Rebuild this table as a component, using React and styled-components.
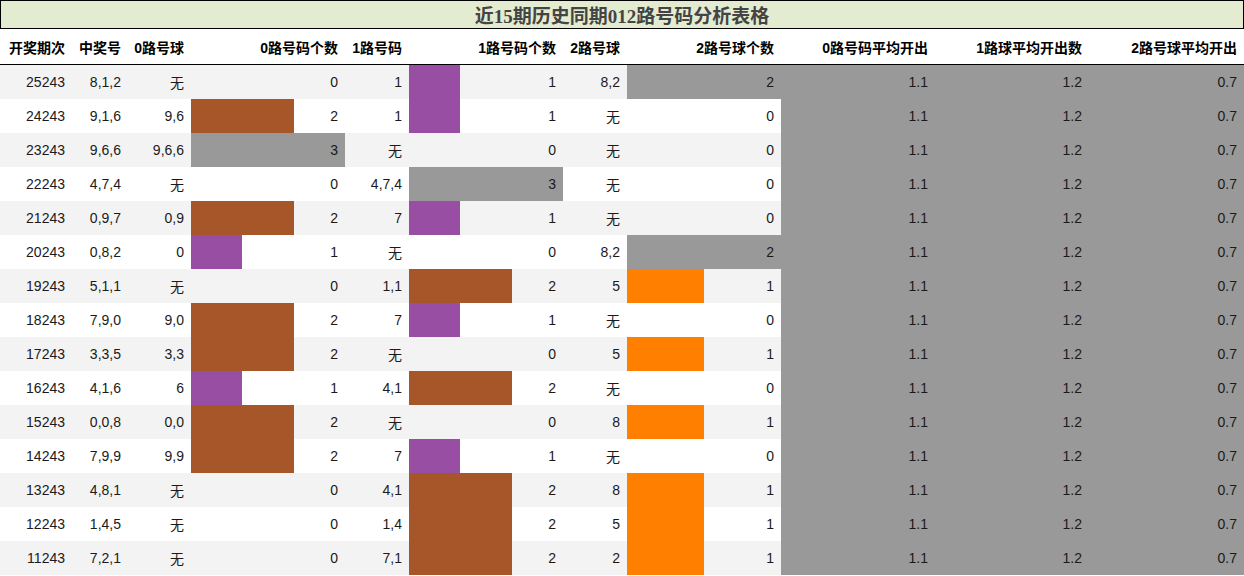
import styled, { createGlobalStyle } from 'styled-components';

const GlobalStyle = createGlobalStyle`
  body {
    margin: 0;
    background: #ffffff;
    font-family: 'Liberation Sans', 'Noto Sans CJK SC', sans-serif;
  }
`;

const COLS = '72px 56px 63px 154px 64px 154px 64px 154px 154px 154px 1fr';

const ZERO_ONE_COLORS = { 1: '#984ea3', 2: '#a65628', 3: '#999999' };
const TWO_COLORS = { 1: '#ff7f00', 2: '#999999' };

const rows = [
  ['25243', '8,1,2', '无', 0, '1', 1, '8,2', 2],
  ['24243', '9,1,6', '9,6', 2, '1', 1, '无', 0],
  ['23243', '9,6,6', '9,6,6', 3, '无', 0, '无', 0],
  ['22243', '4,7,4', '无', 0, '4,7,4', 3, '无', 0],
  ['21243', '0,9,7', '0,9', 2, '7', 1, '无', 0],
  ['20243', '0,8,2', '0', 1, '无', 0, '8,2', 2],
  ['19243', '5,1,1', '无', 0, '1,1', 2, '5', 1],
  ['18243', '7,9,0', '9,0', 2, '7', 1, '无', 0],
  ['17243', '3,3,5', '3,3', 2, '无', 0, '5', 1],
  ['16243', '4,1,6', '6', 1, '4,1', 2, '无', 0],
  ['15243', '0,0,8', '0,0', 2, '无', 0, '8', 1],
  ['14243', '7,9,9', '9,9', 2, '7', 1, '无', 0],
  ['13243', '4,8,1', '无', 0, '4,1', 2, '8', 1],
  ['12243', '1,4,5', '无', 0, '1,4', 2, '5', 1],
  ['11243', '7,2,1', '无', 0, '7,1', 2, '2', 1],
];

const headers = [
  '开奖期次', '中奖号', '0路号球', '0路号码个数', '1路号码', '1路号码个数',
  '2路号球', '2路号球个数', '0路号码平均开出', '1路球平均开出数', '2路号球平均开出',
];

export default function App() {
  return (
    <>
      <GlobalStyle />
      <Page>
        <Title>近15期历史同期012路号码分析表格</Title>
        <HeaderRow>
          {headers.map((h) => <HeadCell key={h}>{h}</HeadCell>)}
        </HeaderRow>
        {rows.map((r, i) => {
          const bg = i % 2 === 0 ? '#f3f3f3' : '#ffffff';
          return (
            <Row key={r[0]} $bg={bg}>
              <Cell>{r[0]}</Cell>
              <Cell>{r[1]}</Cell>
              <Cell>{r[2]}</Cell>
              <BarCell $pct={(r[3] / 3) * 100} $color={ZERO_ONE_COLORS[r[3]]}>{r[3]}</BarCell>
              <Cell>{r[4]}</Cell>
              <BarCell $pct={(r[5] / 3) * 100} $color={ZERO_ONE_COLORS[r[5]]}>{r[5]}</BarCell>
              <Cell>{r[6]}</Cell>
              <BarCell $pct={(r[7] / 2) * 100} $color={TWO_COLORS[r[7]]}>{r[7]}</BarCell>
              <Cell $fill="#999999">1.1</Cell>
              <Cell $fill="#999999">1.2</Cell>
              <Cell $fill="#999999">0.7</Cell>
            </Row>
          );
        })}
      </Page>
    </>
  );
}

const Page = styled.div`
  width: 1244px;
  display: flex;
  flex-direction: column;
`;

const Title = styled.div`
  height: 27px;
  border: 1px solid #000000;
  background: #e3ebd0;
  display: flex;
  align-items: center;
  justify-content: center;
  font-family: 'Liberation Serif', 'Noto Sans CJK SC', serif;
  font-weight: 700;
  font-size: 19px;
  color: #444444;
`;

const HeaderRow = styled.div`
  display: grid;
  grid-template-columns: ${COLS};
  height: 35px;
  border-bottom: 1px solid #000000;
  background: #ffffff;
`;

const HeadCell = styled.div`
  display: flex;
  align-items: center;
  justify-content: flex-end;
  padding-right: 7px;
  font-weight: 700;
  font-size: 14px;
  color: #000000;
  white-space: nowrap;
`;

const Row = styled.div`
  display: grid;
  grid-template-columns: ${COLS};
  height: 34px;
  background: ${(p) => p.$bg};
`;

const Cell = styled.div`
  display: flex;
  align-items: center;
  justify-content: flex-end;
  padding-right: 7px;
  font-size: 14px;
  color: #1a1a1a;
  background: ${(p) => p.$fill || 'transparent'};
  white-space: nowrap;
`;

const BarCell = styled(Cell)`
  background: ${(p) =>
    p.$pct > 0
      ? `linear-gradient(to right, ${p.$color} 0, ${p.$color} ${p.$pct}%, transparent ${p.$pct}%)`
      : 'transparent'};
`;
